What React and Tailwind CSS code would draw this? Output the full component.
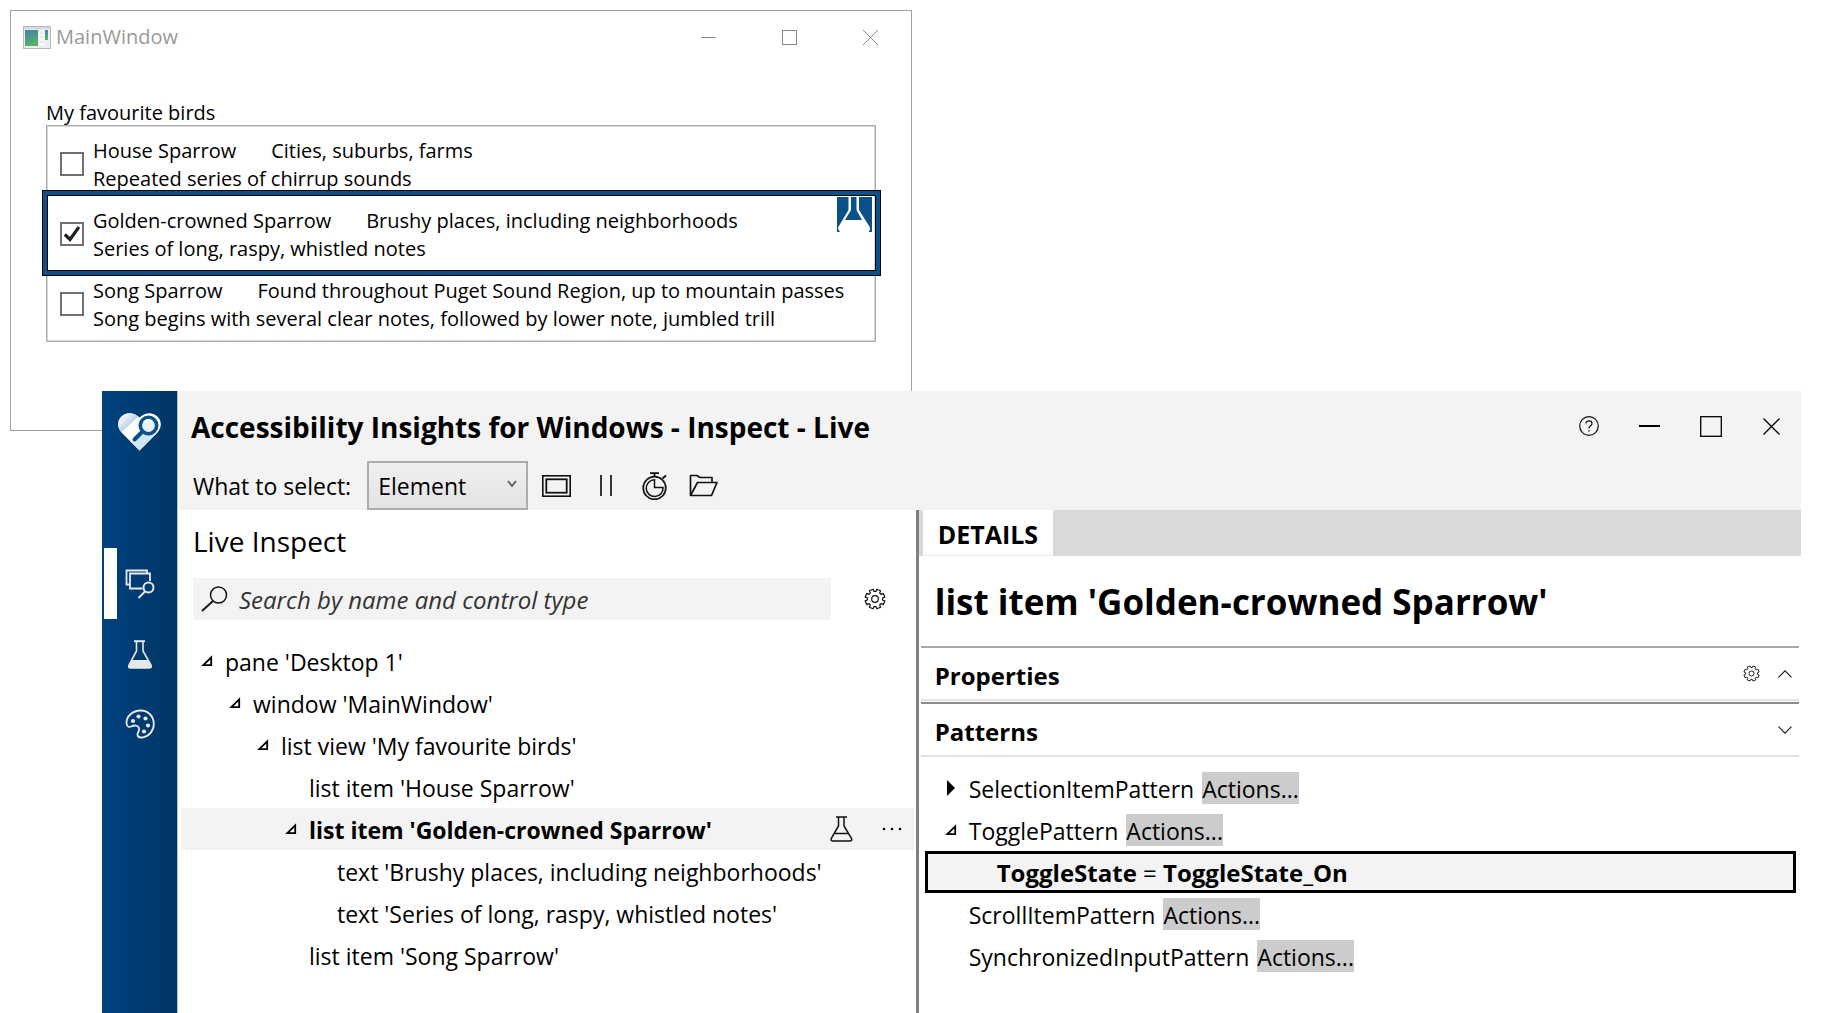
import React from "react";

const birds = [
  { name: "House Sparrow", habitat: "Cities, suburbs, farms", song: "Repeated series of chirrup sounds" },
  { name: "Golden-crowned Sparrow", habitat: "Brushy places, including neighborhoods", song: "Series of long, raspy, whistled notes", checked: true },
  { name: "Song Sparrow", habitat: "Found throughout Puget Sound Region, up to mountain passes", song: "Song begins with several clear notes, followed by lower note, jumbled trill" },
];

function AppIcon() {
  return (
    <svg width="28" height="23" viewBox="0 0 28 23" aria-hidden="true">
      <defs>
        <linearGradient id="pane" x1="0" y1="0" x2="0.3" y2="1">
          <stop offset="0" stopColor="#3f7fa8" />
          <stop offset="1" stopColor="#58b368" />
        </linearGradient>
      </defs>
      <rect x="0.5" y="0.5" width="27" height="22" fill="#eceef0" stroke="#b4b8bd" />
      <rect x="1" y="1" width="26" height="2" fill="#d4d8dc" />
      <rect x="2" y="4" width="13" height="16" fill="url(#pane)" />
      <rect x="16" y="4" width="5" height="16" fill="#f7f7f7" />
      <path d="M17 7h3M17 11h3M17 16h3" stroke="#d6d6d6" />
      <rect x="22" y="4" width="3" height="10" fill="url(#pane)" />
    </svg>
  );
}

function Logo() {
  return (
    <svg width="43" height="38" viewBox="0 0 43 38" aria-hidden="true">
      <defs>
        <linearGradient id="lobe" x1="0" y1="0" x2="1" y2="1">
          <stop offset="0.1" stopColor="#ffffff" />
          <stop offset="0.6" stopColor="#b9d3ea" />
        </linearGradient>
      </defs>
      <path d="M21.500 37.500 L4 20 C-1 15 -1 8 3.500 3.600 C8 -0.800 15 -0.800 19.500 3 L21.500 4.500 L23.500 3 C28 -0.800 35 -0.800 39.500 3.600 C44 8 44 15 39 20 Z" fill="#ffffff" />
      <path d="M3.500 19 C-1 15 -1 8 3.500 3.600 C8 -0.800 15 -0.800 20 4 Z" fill="url(#lobe)" />
      <path d="M21.500 37.500 L11.500 27.500 L16 29 L24 20.500 L39.500 19.500 Z" fill="#d3e6f5" />
      <circle cx="30.500" cy="12.500" r="8.200" fill="#e9f2fa" stroke="#0b4f8c" strokeWidth="3.600" />
      <path d="M25 9 a6.400 6.400 0 0 1 10 -1 Z" fill="#ffffff" />
      <path d="M24.500 18.500 L16.500 26.500" stroke="#0b4f8c" strokeWidth="4" strokeLinecap="round" />
    </svg>
  );
}

function InspectIcon() {
  return (
    <svg width="30" height="30" viewBox="0 0 30 30" fill="none" stroke="#e8e8e8" strokeWidth="1.800" aria-hidden="true">
      <path d="M5 15.500H1.500V1.500H22V4" />
      <path d="M17.500 19.500H5V4.500H25V12" />
      <circle cx="23.500" cy="18.500" r="5" strokeWidth="2" />
      <path d="M20 22.500L13.500 29" strokeWidth="2" />
    </svg>
  );
}

function SideFlaskIcon() {
  return (
    <svg width="26" height="29" viewBox="0 0 26 29" fill="none" stroke="#e8e8e8" strokeWidth="1.600" aria-hidden="true">
      <path d="M7 1.200H18" strokeWidth="2" />
      <path d="M9.500 1V11L2 25C1.300 27 2 28 3.500 28H22C24 28 24.700 27 24 25L16 11V1" />
      <path d="M5.200 20H20.800L24 26Q24 28 22.500 28H3Q1 28 2 26Z" fill="#e8e8e8" stroke="none" />
    </svg>
  );
}

function PaletteIcon() {
  return (
    <svg width="30" height="30" viewBox="0 0 30 30" aria-hidden="true">
      <path
        d="M15.500 1.500C7.500 1.500 1.500 7.500 1.500 13.500C1.500 17.500 3.500 18.500 6 17.500C9.500 16 13 16 14 19C15 22 12 23.500 12.500 26C13 28.500 15.500 28.800 18 28.300C24.500 27 28.800 21.500 28.800 15C28.800 7 23 1.500 15.500 1.500Z"
        fill="none" stroke="#e8e8e8" strokeWidth="1.800"
      />
      <g fill="#e8e8e8">
        <circle cx="8" cy="12" r="2.100" />
        <circle cx="13.500" cy="7.500" r="2.100" />
        <circle cx="20.500" cy="9.500" r="2.100" />
        <circle cx="23" cy="16.500" r="2.100" />
        <circle cx="19" cy="22.500" r="2.100" />
      </g>
    </svg>
  );
}

function FlaskIcon() {
  return (
    <svg width="23" height="26" viewBox="0 0 23 26" fill="none" stroke="#111" strokeWidth="1.500" aria-hidden="true">
      <path d="M6 1H17M8.500 1V10L1.500 22C0.500 24 1.500 25 3 25H19.500C21.500 25 22.300 24 21.300 22L14 10V1" />
      <path d="M5 17.500H18" />
    </svg>
  );
}

function Gear({ size }) {
  const points = [];
  const teeth = 8;
  for (let i = 0; i < teeth; i++) {
    const a = (i * 2 * Math.PI) / teeth + Math.PI / 8;
    [[-0.27, 7.6], [-0.2, 10], [0.2, 10], [0.27, 7.6]].forEach(([d, r]) => {
      points.push((11 + r * Math.cos(a + d)).toFixed(2) + "," + (11 + r * Math.sin(a + d)).toFixed(2));
    });
  }
  return (
    <svg width={size} height={size} viewBox="0 0 22 22" fill="none" stroke="#111" strokeWidth="1.200" strokeLinejoin="round" aria-hidden="true">
      <polygon points={points.join(" ")} />
      <circle cx="11" cy="11" r="3.300" />
    </svg>
  );
}

function OpenArrow() {
  return (
    <svg width="12" height="12" viewBox="0 0 12 12" aria-hidden="true">
      <path d="M2.300 10.200H10.200V2.300Z" fill="#fff" stroke="#000" strokeWidth="1.800" />
    </svg>
  );
}

function ClosedArrow() {
  return (
    <svg width="12" height="16" viewBox="0 0 12 16" aria-hidden="true">
      <path d="M2 0L10 8L2 16Z" fill="#000" />
    </svg>
  );
}

function Chevron({ up }) {
  return (
    <svg width="14" height="8" viewBox="0 0 14 8" fill="none" stroke="#222" strokeWidth="1.200" aria-hidden="true">
      <path d={up ? "M0.500 7.300L7 0.800L13.500 7.300" : "M0.500 0.700L7 7.200L13.500 0.700"} />
    </svg>
  );
}

function BirdRow({ bird }) {
  return (
    <li>
      <label className="relative flex h-[70px] items-center pl-[13px]">
        <input
          type="checkbox"
          defaultChecked={bird.checked}
          className="peer mb-0.5 h-6 w-6 shrink-0 appearance-none border-2 border-[#707070] bg-white"
        />
        <svg className="pointer-events-none absolute left-[17px] mb-0.5 hidden h-4 w-4 peer-checked:block" viewBox="0 0 16 16" fill="none" stroke="#212121" strokeWidth="3.200" aria-hidden="true">
          <path d="M0.800 8.500L6 13.500L15 1" />
        </svg>
        <span className="ml-[9px] text-[20px] leading-7 whitespace-nowrap">
          <span>{bird.name}</span>
          <span className="ml-[35px]">{bird.habitat}</span>
          <br />
          <span>{bird.song}</span>
        </span>
        {bird.checked && (
          <span className="pointer-events-none absolute -top-2.5 -right-1.5 -bottom-1.5 -left-[5px] border border-black">
            <span className="block h-full border-4 border-[#0b5086]">
              <span className="flex h-full justify-end border border-black pt-px pr-[3px]">
                <svg width="35" height="35" viewBox="0 0 35 35" aria-hidden="true">
                  <rect width="35" height="35" fill="#0b5086" />
                  <path d="M11.500 0V13L1 30.500Q1 33 3 35H31.500Q33.500 33 33 30.500L22 13V0Z" fill="#fff" />
                  <path d="M14 0H19.500V13L25 23H8L14 13Z" fill="#0b5086" />
                </svg>
              </span>
            </span>
          </span>
        )}
      </label>
    </li>
  );
}

function MainWindow() {
  return (
    <section aria-label="MainWindow" className="absolute top-2.5 left-2.5 h-[421px] w-[calc(50%-12px)] border border-[#a0a0a0] bg-white">
      <header className="flex h-[52px] items-center pl-3 text-[#999]">
        <AppIcon />
        <h1 className="ml-[5px] flex-1 text-[20px]">MainWindow</h1>
        <div className="flex">
          <button aria-label="Minimize" className="flex h-10 w-[81px] items-center justify-center">
            <span className="block h-px w-[15px] bg-[#888]" />
          </button>
          <button aria-label="Maximize" className="flex h-10 w-[81px] items-center justify-center">
            <span className="block h-[15px] w-[15px] border border-[#888]" />
          </button>
          <button aria-label="Close" className="flex h-10 w-[81px] items-center justify-center">
            <svg width="15" height="15" viewBox="0 0 15 15" stroke="#888" aria-hidden="true">
              <path d="M0 0L15 15M15 0L0 15" />
            </svg>
          </button>
        </div>
      </header>
      <div className="mx-[35px] mt-9">
        <h2 className="pt-0.5 text-[20px] leading-6" id="birds">My favourite birds</h2>
        <ul aria-labelledby="birds" className="h-[217px] border border-[#abadb3] pt-1 shadow-[inset_0_0_0_1px_#d5d6d9]">
          {birds.map((b) => <BirdRow key={b.name} bird={b} />)}
        </ul>
      </div>
    </section>
  );
}

const tree = [
  { pad: "pl-5", open: true, text: "pane 'Desktop 1'" },
  { pad: "pl-12", open: true, text: "window 'MainWindow'" },
  { pad: "pl-[76px]", open: true, text: "list view 'My favourite birds'" },
  { pad: "pl-[104px]", text: "list item 'House Sparrow'" },
  { pad: "pl-[104px]", open: true, selected: true, text: "list item 'Golden-crowned Sparrow'" },
  { pad: "pl-[132px]", text: "text 'Brushy places, including neighborhoods'" },
  { pad: "pl-[132px]", text: "text 'Series of long, raspy, whistled notes'" },
  { pad: "pl-[104px]", text: "list item 'Song Sparrow'" },
];

function TreeRow({ node }) {
  return (
    <li className={"flex h-[42px] items-center text-[23px] whitespace-nowrap " + node.pad + (node.selected ? " bg-[#f3f3f3] font-bold" : "")}>
      <span className="w-6 shrink-0">{node.open && <OpenArrow />}</span>
      <span className="flex-1 pt-0.5">{node.text}</span>
      {node.selected && (
        <span className="flex items-center gap-[29px] pr-3">
          <button aria-label="Run tests"><FlaskIcon /></button>
          <button aria-label="More actions">
            <svg width="20" height="4" viewBox="0 0 20 4" fill="#111" aria-hidden="true">
              <circle cx="2" cy="2" r="1.300" /><circle cx="10" cy="2" r="1.300" /><circle cx="18" cy="2" r="1.300" />
            </svg>
          </button>
        </span>
      )}
    </li>
  );
}

function Sidebar() {
  return (
    <nav aria-label="Modes" className="flex w-[76px] shrink-0 flex-col border-r border-[#a9c4e0] bg-linear-to-r from-[#00427f] to-[#003564]">
      <div className="mt-[22px] flex h-[38px] justify-center"><Logo /></div>
      <div className="mt-[97px] flex flex-col">
        <button aria-label="Inspect" aria-current="page" className="flex h-[71px] items-center pl-0.5">
          <span className="h-[71px] w-[13px] bg-white" />
          <span className="ml-2"><InspectIcon /></span>
        </button>
        <button aria-label="Test" className="flex h-[70px] items-center justify-center"><SideFlaskIcon /></button>
        <button aria-label="Color contrast" className="flex h-[70px] items-center justify-center"><PaletteIcon /></button>
      </div>
    </nav>
  );
}

function Header() {
  return (
    <header className="ml-px h-[119px] bg-[#f3f3f3]">
      <div className="flex h-[70px] items-center pl-3">
        <h1 className="flex-1 pt-0.5 text-[28px] font-bold whitespace-nowrap">Accessibility Insights for Windows - Inspect - Live</h1>
        <div className="flex">
          <button aria-label="Help" className="flex h-12 w-[61px] items-center justify-center">
            <svg width="20" height="20" viewBox="0 0 20 20" fill="none" stroke="#111" strokeWidth="1.200" aria-hidden="true">
              <circle cx="10" cy="10" r="9.300" />
              <path d="M7 7.500C7 4 13 4 13 7.500C13 9.800 10 9.800 10 12.500M10 14V15.500" />
            </svg>
          </button>
          <button aria-label="Minimize" className="flex h-12 w-[61px] items-center justify-center">
            <span className="block h-0.5 w-[21px] bg-black" />
          </button>
          <button aria-label="Maximize" className="flex h-12 w-[61px] items-center justify-center">
            <svg width="22" height="21" viewBox="0 0 22 21" fill="none" stroke="#000" strokeWidth="1.300" aria-hidden="true">
              <rect x="0.700" y="0.700" width="20.600" height="19.600" />
            </svg>
          </button>
          <button aria-label="Close" className="flex h-12 w-[60px] items-center justify-center">
            <svg width="17" height="17" viewBox="0 0 17 17" stroke="#000" strokeWidth="1.300" aria-hidden="true">
              <path d="M0.500 0.500L16.500 16.500M16.500 0.500L0.500 16.500" />
            </svg>
          </button>
        </div>
      </div>
      <div className="flex h-[49px] items-center pl-3.5">
        <label htmlFor="scope" className="pt-0.5 text-[23px] whitespace-nowrap">What to select:</label>
        <div className="relative ml-4">
          <select id="scope" className="h-[49px] w-[161px] appearance-none border-2 border-[#acacac] bg-linear-to-b from-[#f0f0f0] to-[#e3e3e3] pt-0.5 pl-[9px] text-[23px]">
            <option>Element</option>
          </select>
          <svg className="pointer-events-none absolute top-[19px] right-[11px]" width="10" height="8" viewBox="0 0 10 8" fill="none" stroke="#606060" strokeWidth="2" aria-hidden="true">
            <path d="M1 1L5 6L9 1" />
          </svg>
        </div>
        <div className="ml-1 flex">
          <button aria-label="Highlighter" className="flex h-10 w-[49px] items-center justify-center">
            <svg width="29" height="22" viewBox="0 0 29 22" fill="none" stroke="#111" aria-hidden="true">
              <rect x="0.800" y="0.800" width="27.400" height="20.400" strokeWidth="1.600" />
              <rect x="4.300" y="4.300" width="20.400" height="13.400" strokeWidth="1.800" />
            </svg>
          </button>
          <button aria-label="Pause" className="flex h-10 w-[49px] items-center justify-center">
            <svg width="12" height="21" viewBox="0 0 12 21" stroke="#222" strokeWidth="1.800" aria-hidden="true">
              <path d="M1 0V21M11 0V21" />
            </svg>
          </button>
          <button aria-label="Timer" className="flex h-10 w-[49px] items-center justify-center">
            <svg width="26" height="28" viewBox="0 0 26 28" fill="none" stroke="#111" strokeWidth="1.500" aria-hidden="true">
              <path d="M8 1.200H17M12.500 1V4" strokeWidth="1.800" />
              <path d="M20.500 6.500L24 3.500" strokeWidth="2" />
              <circle cx="12.500" cy="16" r="11.300" strokeWidth="1.700" />
              <path d="M12.500 7.800V15.500H21A8.400 8.400 0 1 1 12.500 7.800Z" />
            </svg>
          </button>
          <button aria-label="Open file" className="flex h-10 w-[49px] items-center justify-center">
            <svg width="29" height="23" viewBox="0 0 29 23" fill="none" stroke="#111" strokeWidth="1.700" strokeLinejoin="round" aria-hidden="true">
              <path d="M1.500 21V1.500H8L11 3.500H23V8" />
              <path d="M1.500 21.500L8.500 8.500H28L22.500 21.500Z" />
            </svg>
          </button>
        </div>
      </div>
    </header>
  );
}

function LivePane() {
  return (
    <section className="min-w-0">
      <h2 className="h-[68px] pt-[11px] pl-[15px] text-[28px] leading-[40px]">Live Inspect</h2>
      <div className="flex h-[42px] items-center pl-[15px]">
        <div className="flex h-[42px] flex-1 items-center bg-[#f3f3f3] pl-2">
          <svg width="27" height="26" viewBox="0 0 27 26" fill="none" stroke="#111" strokeWidth="1.500" aria-hidden="true">
            <circle cx="17.500" cy="9" r="8" />
            <path d="M12 15L1 25" strokeWidth="1.800" />
          </svg>
          <input aria-label="Search by name and control type" placeholder="Search by name and control type" className="ml-[11px] min-w-0 flex-1 bg-transparent pt-0.5 text-[24px] italic outline-none placeholder:text-[#333]" />
        </div>
        <button aria-label="Settings" className="mr-[30px] ml-[33px]"><Gear size={22} /></button>
      </div>
      <ul className="mt-5 mr-0.5 ml-[3px]">
        {tree.map((n) => <TreeRow key={n.text} node={n} />)}
      </ul>
    </section>
  );
}

function PatternRow({ name, arrow }) {
  return (
    <li className="flex h-[42px] items-center pl-5 text-[23px] whitespace-nowrap">
      <span className="w-6 shrink-0">{arrow}</span>
      <span className="pt-0.5">{name}</span>
      <button className="ml-2 h-8 bg-[#cccccc] pt-0.5 leading-[30px]">Actions...</button>
    </li>
  );
}

function DetailsPane() {
  return (
    <section className="min-w-0 border-l-[3px] border-[#808080]">
      <div role="tablist" className="flex h-[46px] bg-[#d9d9d9] pl-1">
        <button role="tab" aria-selected="true" className="border-b border-[#e6e6e6] bg-white px-[15px] pt-1 text-[25px] font-bold">DETAILS</button>
      </div>
      <div className="mx-0.5">
        <h2 className="h-[90px] pt-px pl-3.5 text-[35px] leading-[90px] font-bold whitespace-nowrap">list item 'Golden-crowned Sparrow'</h2>
        <div className="flex h-[55px] items-center border-t-2 border-b-2 border-t-[#a8a8a8] border-b-[#e2e2e2] pr-[7px] pl-3.5">
          <h3 className="flex-1 pt-1 text-[24px] font-bold">Properties</h3>
          <button aria-label="Property settings" className="mr-[18px]"><Gear size={17} /></button>
          <button aria-label="Collapse properties"><Chevron up /></button>
        </div>
        <div className="mt-px flex h-[55px] items-center border-t-2 border-b-2 border-t-[#8c8c8c] border-b-[#e2e2e2] pr-[7px] pl-3.5">
          <h3 className="flex-1 pt-1 text-[24px] font-bold">Patterns</h3>
          <button aria-label="Expand patterns"><Chevron /></button>
        </div>
        <ul className="mt-2.5 mr-[3px] ml-1">
          <PatternRow name="SelectionItemPattern" arrow={<ClosedArrow />} />
          <PatternRow name="TogglePattern" arrow={<OpenArrow />} />
          <li className="flex h-[42px] items-center border-3 border-black bg-[#f3f3f3] pt-0.5 pl-[69px] text-[24px] whitespace-pre">
            <b>ToggleState</b> = <b>ToggleState_On</b>
          </li>
          <PatternRow name="ScrollItemPattern" />
          <PatternRow name="SynchronizedInputPattern" />
        </ul>
      </div>
    </section>
  );
}

export default function App() {
  return (
    <main className="relative min-h-screen overflow-hidden bg-white pt-[391px] font-['Open_Sans','Noto_Sans',sans-serif] text-black">
      <MainWindow />
      <section aria-label="Accessibility Insights for Windows" className="relative mr-[26px] ml-[102px] flex min-h-[calc(100vh-391px)] bg-white">
        <Sidebar />
        <div className="flex min-w-0 flex-1 flex-col">
          <Header />
          <div className="grid flex-1 grid-cols-[minmax(0,5fr)_minmax(0,6fr)]">
            <LivePane />
            <DetailsPane />
          </div>
        </div>
      </section>
    </main>
  );
}
